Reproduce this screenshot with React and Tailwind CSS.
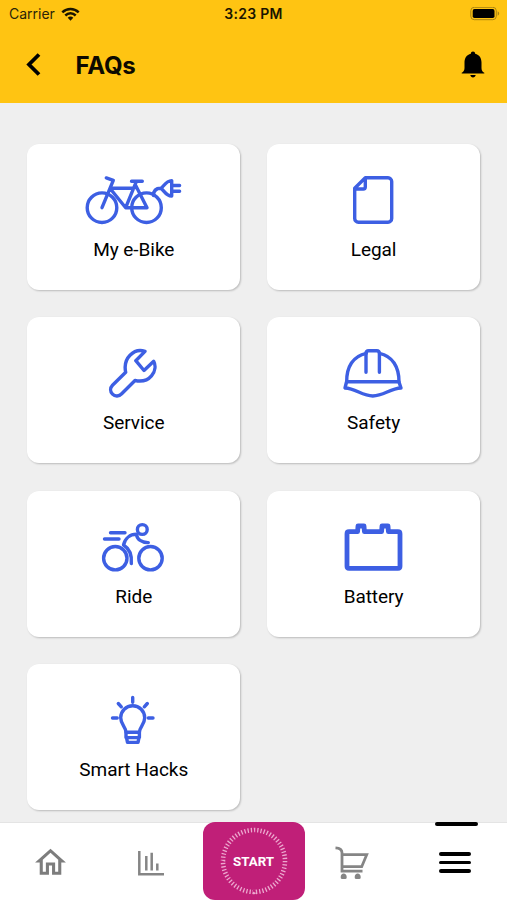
import { MdOutlineHome } from "react-icons/md";

const BikeIcon = () => (
    <g>
        <circle cx="19" cy="33.7" r="14.8" />
        <circle cx="63.5" cy="33.7" r="14.8" />
        <path d="M23.3 3.9l7 2.5L19 33.7M27.7 14.3H51M28.3 16l14.4 17.7H64L52.7 11.5M42.7 33.7l10.6-26M48.5 7.3h10.8" />
        <path d="M70.5 21.5c0-4.5 2.5-7.2 7.2-7.2 3-1 4.5-7.5 11-7.7v15.4c-6.5-.2-8-6.7-11-7.7M89.3 11.5h7.3M89.3 17.3h7.3" />
    </g>
);

const LegalIcon = () => (
    <path d="M42.3 3.8H65a3.7 3.7 0 0 1 3.7 3.7v37a3.7 3.7 0 0 1-3.7 3.7H35.4a3.7 3.7 0 0 1-3.7-3.7V14.2L42.3 3.8V13a2 2 0 0 1-2 2h-8.2" />
);

const ServiceIcon = () => (
    <path d="M62 4.4l-9.2 9.3 8.2 9.8 9.7-9.2c2 3.7 2 9.5-2.2 14.5-4 4.7-10.5 6-16.5 4.7L38.7 46.8c-2.7 2.8-6.7 2.8-9.2.3s-2.5-6.3 0-8.9L42.7 25.3c-1.4-6.5.2-12.8 4.3-17S57 2.6 62 4.4z" />
);

const SafetyIcon = () => (
    <g>
        <path d="M23.7 34.7C23.5 20 30 9 43.3 6.3M56.5 6.3C69.5 9 76 20 76 34.7M23.7 34.7H76" />
        <path d="M43 25.2V6.5c0-1.7 1-2.8 2.7-2.8h8c1.7 0 2.7 1.1 2.7 2.8v18.7" />
        <path d="M23.5 35L22 41c11 .5 17 8 27.8 8S67 41.5 78 41l-2-6" />
    </g>
);

const RideIcon = () => (
    <g>
        <circle cx="32.3" cy="37.2" r="11.7" />
        <circle cx="67.5" cy="37.2" r="11.7" />
        <circle cx="59.3" cy="8.5" r="4.9" />
        <path d="M27.5 11.7H42M21.5 18H36M48.3 42.5c.7-8-1.3-14.5-7.8-18.5C42 17.5 47 13.3 53.5 13.3c.5 4.7 4.5 8.4 11.8 8.3" />
    </g>
);

const BatteryIcon = () => (
    <path
        strokeWidth="4.8"
        d="M26 10.7h8.6l.4-5.7h6l.4 5.7h17.2l.4-5.7h6l.4 5.7H75q2 0 2 2v32.6q0 2-2 2H26q-2 0-2-2V12.7q0-2 2-2z"
    />
);

const BulbIcon = () => (
    <g>
        <path d="M43 38.3c0-5-5.3-7.7-5.3-14.5a12 12 0 0 1 24 0c0 6.8-5.3 9.500-5.300 14.5z" />
        <path d="M43 38.3v5.3h13.4v-5.3M43.5 43.6l1 4.8H55l1-4.8" />
        <path d="M49.7 3.5v4.8M35.3 9.5l3 3.3M64.3 9.5l-3 3.3M29.5 24h4.7M65.3 24H70" />
    </g>
);

const topics = [
    { name: "My e-Bike", Icon: BikeIcon },
    { name: "Legal", Icon: LegalIcon },
    { name: "Service", Icon: ServiceIcon },
    { name: "Safety", Icon: SafetyIcon },
    { name: "Ride", Icon: RideIcon },
    { name: "Battery", Icon: BatteryIcon },
    { name: "Smart Hacks", Icon: BulbIcon },
];

const StatusBar = () => (
    <div className="grid h-[27px] grid-cols-3 items-center px-[9px] font-['Inter',sans-serif] text-[14px]">
        <div className="flex items-center gap-1.5 text-[#2b2408]">
            <span>Carrier</span>
            <svg width="19" height="14" viewBox="0 0 19 14" fill="none" stroke="#1a1500" strokeWidth="2.5">
                <path d="M1.3 5.3c4.7-4.5 11.7-4.5 16.4 0M4.3 8.5c3-2.9 7.4-2.9 10.4 0" />
                <path d="M6.7 10.7c1.6-1.5 4-1.5 5.6 0l-2.8 3z" fill="#1a1500" stroke="none" />
            </svg>
        </div>
        <span className="text-center font-semibold tracking-[0.3px] text-[#1a1500]">3:23 PM</span>
        <svg className="mr-[-2px] justify-self-end" width="30" height="14" viewBox="0 0 30 14">
            <rect x=".8" y=".3" width="25.5" height="12.4" rx="3.5" fill="none" stroke="#a98413" />
            <rect x="2.7" y="2.1" width="21.8" height="8.9" rx="1.8" />
            <path d="M27.7 4.3c2 .8 2 3.6 0 4.4z" fill="#a98413" />
        </svg>
    </div>
);

const Header = () => (
    <header className="h-[103px] shrink-0 bg-[#ffc412]">
        <StatusBar />
        <div className="flex h-[76px] items-center pr-[22px] pl-[25px]">
            <svg width="18" height="24" viewBox="0 0 18 24" fill="none" stroke="#000" strokeWidth="3.8">
                <path d="M14 1.5L4 11.5l10 10" />
            </svg>
            <h1 className="mt-[2px] ml-[32.5px] font-['Inter',sans-serif] text-[24px] font-bold tracking-[-0.2px] text-[#0d0a00]">FAQs</h1>
            <svg className="ml-auto" width="24" height="28" viewBox="0 0 24 28">
                <path d="M12 .5c1.3 0 2 .8 2.2 2.2 4.1 1 6.3 4.3 6.3 8.8V17c0 2.3.8 3.8 2.8 4.7v.9H.7v-.9c2-.9 2.8-2.4 2.8-4.7v-5.5c0-4.5 2.2-7.8 6.3-8.8C10 1.3 10.7.5 12 .5z" />
                <path d="M9.3 24h5.4c-.3 1.6-1.3 2.5-2.7 2.5s-2.400-.9-2.7-2.5z" />
            </svg>
        </div>
    </header>
);

const TopicCard = ({ name, Icon }) => (
    <button className="flex h-[146px] flex-col items-center rounded-xl bg-white pt-[30px] shadow-[1px_1px_2px_rgba(0,0,0,0.22)]">
        <svg
            width="101"
            height="52"
            viewBox="0 0 101 52"
            fill="none"
            stroke="#3d5fe3"
            strokeWidth="3.4"
            strokeLinecap="round"
            strokeLinejoin="round"
        >
            <Icon />
        </svg>
        <span className="mt-[10px] text-[19px] leading-[28px] tracking-[-0.05px] text-black">{name}</span>
    </button>
);

const ChartIcon = () => (
    <svg width="26" height="25" viewBox="0 0 26 25" fill="none" stroke="#858585" strokeWidth="2.5">
        <path d="M1.3 0v23.3H26M8.3 5v14.5M13.7 1.7v17.8M19.3 12.5v7" />
    </svg>
);

const CartIcon = () => (
    <svg width="34" height="34" viewBox="0 0 34 34" fill="none" stroke="#858585" strokeWidth="2.8">
        <path d="M.5 1.8c4.5.3 6.5 2 6.5 5v18.4h20.5M7 8.7h24.7l-5 12H7" />
        <g fill="#858585" stroke="none">
            <path d="M5.7 31c0-2 1.3-3.5 3-3.5s3 1.5 3 3.5-.5 2-3 2-3 0-3-2zM19.7 31c0-2 1.3-3.5 3-3.5s3 1.5 3 3.5-.5 2-3 2-3 0-3-2z" />
        </g>
    </svg>
);

const BottomNav = () => (
    <nav className="grid h-[78px] shrink-0 grid-cols-5 border-t border-[#e4e4e4] bg-white">
        <button className="flex items-center justify-center pt-[2px]">
            <MdOutlineHome className="text-[#7d7d7d]" size={37} />
        </button>
        <button className="flex items-center justify-center pt-[3px] pr-[3px]">
            <ChartIcon />
        </button>
        <button className="-mt-px mr-[-0.5px] ml-[0.5px] flex items-center justify-center rounded-xl bg-[#c01f78]">
            <svg width="70" height="70" viewBox="0 0 70 70">
                <circle cx="35" cy="35" r="31" fill="none" stroke="#eca9cf" strokeWidth="4.6" pathLength="180" strokeDasharray="1.2 1.8" />
                <text x="34.5" y="39.5" textAnchor="middle" fill="#fff" className="text-[13.3px] font-bold">START</text>
            </svg>
        </button>
        <button className="flex items-center justify-center pt-[3px] pr-[5px]">
            <CartIcon />
        </button>
        <button className="flex flex-col items-center">
            <span className="h-1 w-[43px] -translate-y-px rounded-full bg-black" />
            <span className="mt-[25px] flex w-[32px] -translate-x-px flex-col gap-[5px]">
                <span className="h-[3.6px] rounded-full bg-black" />
                <span className="h-[3.6px] rounded-full bg-black" />
                <span className="h-[3.6px] rounded-full bg-black" />
            </span>
        </button>
    </nav>
);

const App = () => {
    return (
        <div className="flex h-[900px] w-[507px] flex-col overflow-hidden bg-[#efefef] font-['Roboto',sans-serif]">
            <Header />
            <main className="grid flex-1 grid-cols-2 content-start gap-x-[27px] gap-y-[27.3px] pt-[41px] pr-[27px] pl-[27.4px]">
                {topics.map((topic) => (
                    <TopicCard key={topic.name} {...topic} />
                ))}
            </main>
            <BottomNav />
        </div>
    );
};

export default App;
